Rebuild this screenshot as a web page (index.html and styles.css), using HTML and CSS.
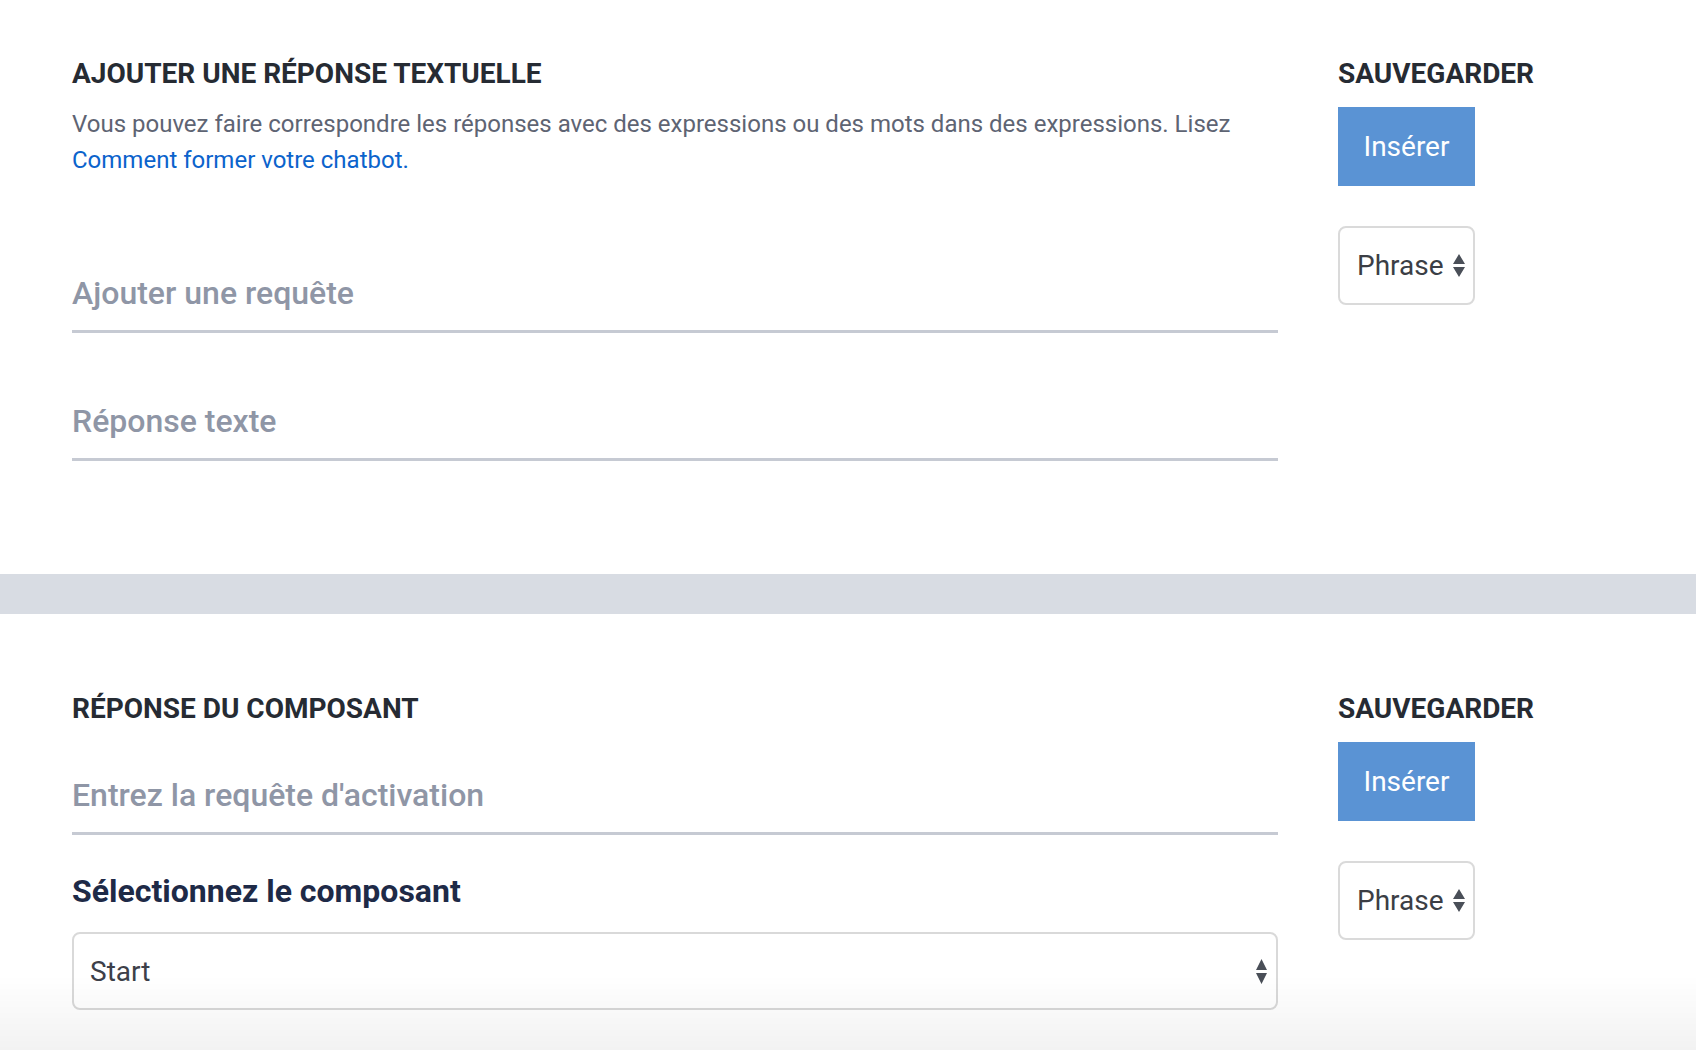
FILE: index.html
```html
<!DOCTYPE html>
<html lang="fr">
<head>
<meta charset="utf-8">
<title>Réponses</title>
<link rel="stylesheet" href="styles.css">
</head>
<body>
  <section class="panel panel-text">
    <div class="main">
      <h2 class="title">AJOUTER UNE RÉPONSE TEXTUELLE</h2>
      <p class="intro">Vous pouvez faire correspondre les réponses avec des expressions ou des mots dans des expressions. Lisez <a class="link" href="#">Comment former votre chatbot.</a></p>
      <input class="line-input query" type="text" placeholder="Ajouter une requête">
      <input class="line-input answer" type="text" placeholder="Réponse texte">
    </div>
    <aside class="side">
      <h2 class="title">SAUVEGARDER</h2>
      <button class="insert" type="button">Insérer</button>
      <div class="mini-select">
        <span class="mini-value">Phrase</span>
        <svg class="arrows-sm" width="12" height="23" viewBox="0 0 12 23"><path d="M6 0 L12 10 L0 10 Z M0 13 L12 13 L6 23 Z"/></svg>
      </div>
    </aside>
  </section>

  <div class="divider"></div>

  <section class="panel panel-component">
    <div class="main">
      <h2 class="title">RÉPONSE DU COMPOSANT</h2>
      <input class="line-input trigger" type="text" placeholder="Entrez la requête d'activation">
      <h3 class="label">Sélectionnez le composant</h3>
      <div class="wide-select">
        <span class="wide-value">Start</span>
        <svg class="arrows-lg" width="11" height="25" viewBox="0 0 11 25"><path d="M5.5 0 L11 11 L0 11 Z M0 14 L11 14 L5.5 25 Z"/></svg>
      </div>
    </div>
    <aside class="side">
      <h2 class="title">SAUVEGARDER</h2>
      <button class="insert" type="button">Insérer</button>
      <div class="mini-select">
        <span class="mini-value">Phrase</span>
        <svg class="arrows-sm" width="12" height="23" viewBox="0 0 12 23"><path d="M6 0 L12 10 L0 10 Z M0 13 L12 13 L6 23 Z"/></svg>
      </div>
    </aside>
  </section>

  <div class="fade"></div>
</body>
</html>
```

FILE: styles.css
```css
html, body {
  margin: 0;
  padding: 0;
  background: #ffffff;
  overflow: hidden;
}

body {
  font-family: "Roboto", "Liberation Sans", sans-serif;
  color: #262b33;
}

.panel {
  display: flex;
  gap: 60px;
  padding-left: 72px;
}

.panel-text {
  padding-top: 57px;
  padding-bottom: 113px;
}

.panel-component {
  padding-top: 78px;
  padding-bottom: 40px;
}

.main {
  width: 1206px;
  flex: none;
  display: flex;
  flex-direction: column;
}

.side {
  flex: none;
  display: flex;
  flex-direction: column;
  align-items: flex-start;
}

.title {
  margin: 0;
  font-size: 28px;
  line-height: 34px;
  font-weight: 700;
  color: #262b33;
  letter-spacing: 0;
}

.intro {
  margin: 15px 0 0;
  font-size: 24px;
  line-height: 36px;
  color: #5e6473;
}

.link {
  color: #0b63cc;
  text-decoration: none;
}

.line-input {
  display: block;
  box-sizing: content-box;
  width: 1206px;
  height: 40px;
  padding: 0 0 17px 0;
  margin: 0;
  border: 0;
  border-bottom: 3px solid #c6cad3;
  background: transparent;
  outline: none;
  font-family: "Roboto", "Liberation Sans", sans-serif;
  font-size: 32px;
  font-weight: 500;
  color: #3a3f4a;
}

.line-input::placeholder {
  color: #8f96a6;
  opacity: 1;
}

.query {
  margin-top: 95px;
}

.answer {
  margin-top: 68px;
}

.trigger {
  margin-top: 49px;
}

.label {
  margin: 38px 0 0;
  font-size: 32px;
  line-height: 36px;
  font-weight: 700;
  color: #1e2a47;
}

.insert {
  margin-top: 16px;
  width: 137px;
  height: 79px;
  border: 0;
  border-radius: 0;
  background: #5a93d4;
  color: #ffffff;
  font-family: "Roboto", "Liberation Sans", sans-serif;
  font-size: 28px;
  font-weight: 400;
  padding: 0;
}

.mini-select {
  margin-top: 40px;
  box-sizing: border-box;
  width: 137px;
  height: 79px;
  border: 2px solid #dadada;
  border-radius: 8px;
  background: #ffffff;
  display: flex;
  align-items: center;
  justify-content: space-between;
  padding: 0 8px 0 17px;
}

.mini-value {
  font-size: 28px;
  color: #3b3e45;
}

.arrows-sm path,
.arrows-lg path {
  fill: #4a4f58;
}

.wide-select {
  margin-top: 23px;
  box-sizing: border-box;
  width: 1206px;
  height: 78px;
  border: 2px solid #d9d9d9;
  border-radius: 8px;
  background: #ffffff;
  display: flex;
  align-items: center;
  justify-content: space-between;
  padding: 0 9px 0 16px;
}

.wide-value {
  font-size: 28px;
  color: #3d4049;
}

.divider {
  height: 40px;
  background: #d8dce3;
}

.fade {
  position: fixed;
  left: 0;
  right: 0;
  bottom: 0;
  height: 75px;
  background: linear-gradient(rgba(0, 0, 0, 0), rgba(0, 0, 0, 0.05));
  pointer-events: none;
}
```
